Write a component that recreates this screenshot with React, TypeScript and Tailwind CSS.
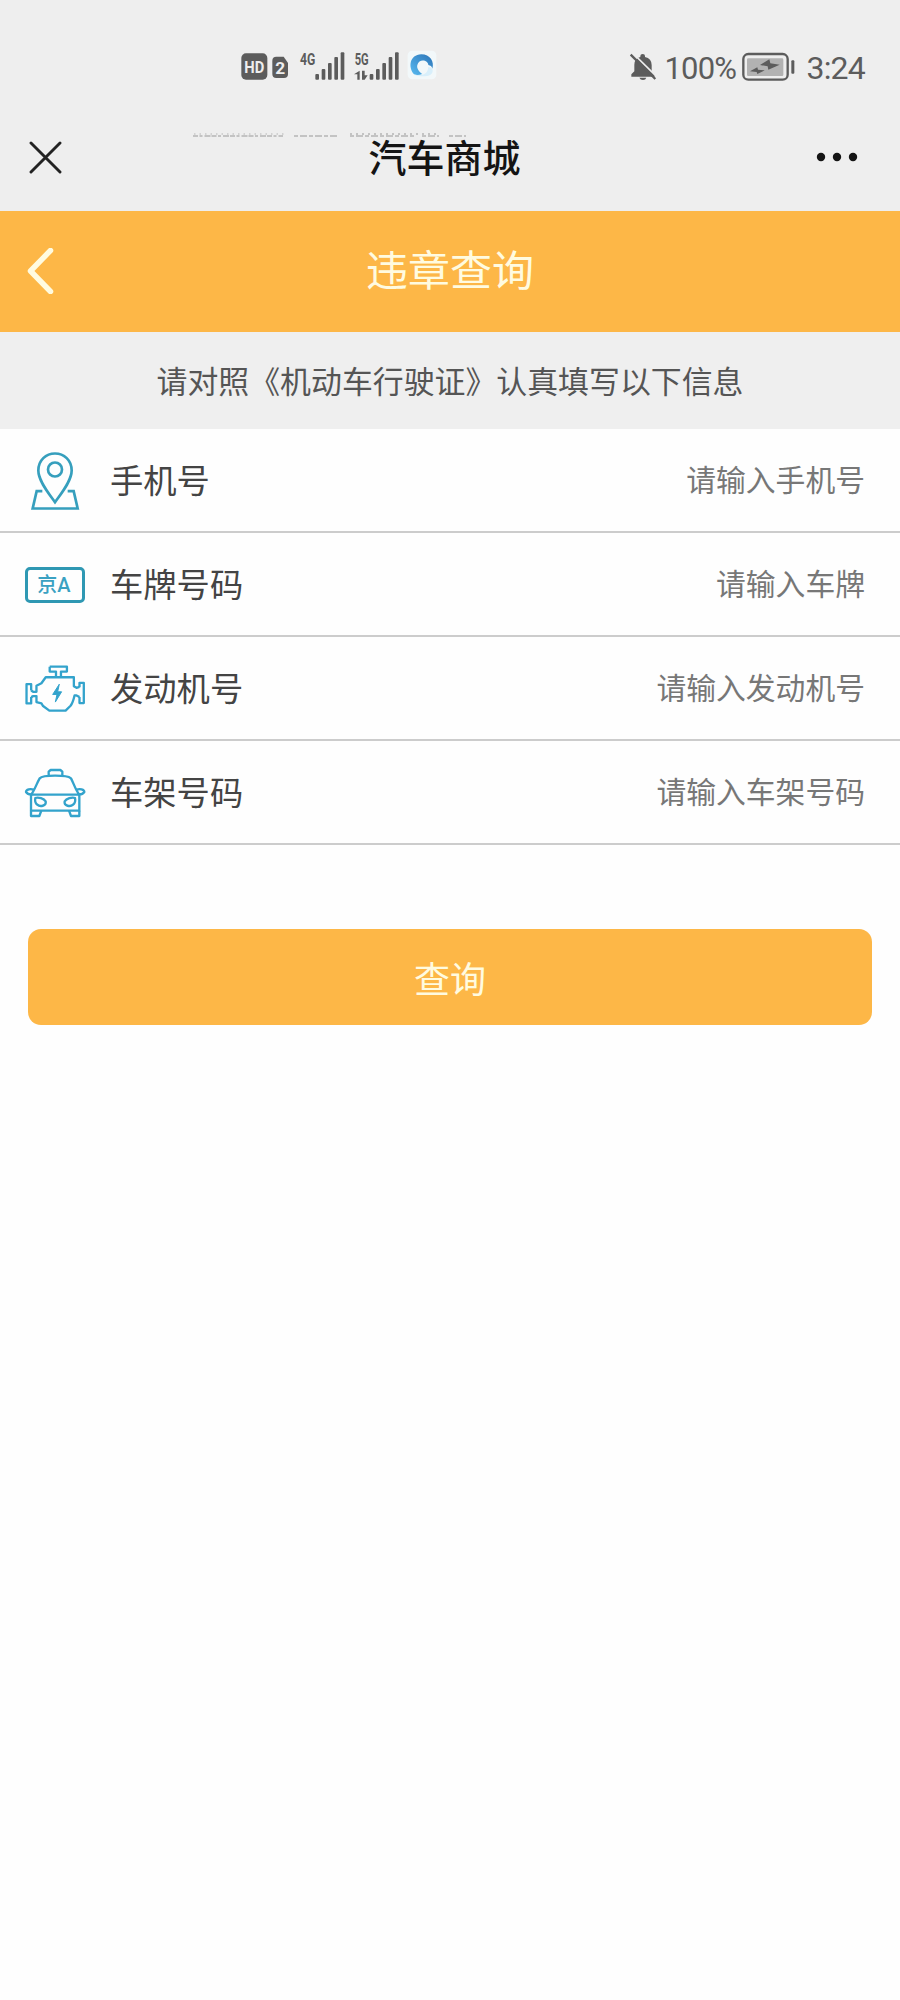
import type { ReactNode } from "react";

function NetworkStatus() {
  return (
    <svg viewBox="0 0 600 120" className="h-10 w-[200px]" fill="#5c5c5c" fontFamily="Roboto, sans-serif">
      <rect x="4" y="22" width="78" height="79" rx="14" />
      <text x="43" y="81" fontSize="50" fontWeight="700" fill="#eee" textAnchor="middle" textLength="60" lengthAdjust="spacingAndGlyphs">HD</text>
      <path d="M109 28h22l13 19v33q0 12-12 12h-23q-12 0-12-12V40q0-12 12-12z" transform="translate(0 4)" />
      <text x="121" y="83" fontSize="52" fontWeight="700" fill="#eee" textAnchor="middle">2</text>
      <text x="180" y="57" fontSize="50" fontWeight="700" textLength="46" lengthAdjust="spacingAndGlyphs">4G</text>
      <rect x="226" y="84" width="11" height="17" rx="3" />
      <rect x="245" y="69" width="11" height="32" rx="3" />
      <rect x="264" y="51" width="11" height="50" rx="3" />
      <rect x="283" y="33" width="11" height="68" rx="3" />
      <rect x="302" y="19" width="11" height="82" rx="3" />
      <text x="344" y="57" fontSize="50" fontWeight="700" textLength="42" lengthAdjust="spacingAndGlyphs">5G</text>
      <path d="M352 101V85h-10l17-11v27zM374 74v14h9l-9 13h-8V74z" />
      <rect x="389" y="84" width="11" height="17" rx="3" />
      <rect x="408" y="69" width="11" height="32" rx="3" />
      <rect x="427" y="51" width="11" height="50" rx="3" />
      <rect x="446" y="33" width="11" height="68" rx="3" />
      <rect x="465" y="19" width="11" height="82" rx="3" />
    </svg>
  );
}

function BrowserBadge() {
  return (
    <svg viewBox="0 0 90 90" className="h-[30px] w-[30px]">
      <defs>
        <linearGradient id="ring" x1="0" y1="1" x2="1" y2="0">
          <stop offset="0" stopColor="#58baf0" />
          <stop offset="1" stopColor="#2b74b8" />
        </linearGradient>
      </defs>
      <rect x="2" y="2" width="86" height="86" rx="14" fill="#f2f8fa" />
      <path d="M21 73C3 53 7 14 43 13c26 0 40 22 33 43-1-7-6-10-12-11 0-15-28-21-33 0-3 10 6 21 15 27-10 4-18 4-25 1z" fill="url(#ring)" />
      <path d="M22 74c9 5 26 6 38 4 11-1 18-9 17-18-2-8-9-9-14-8 1 8-4 20-17 22-9 2-17 0-24 0z" fill="#d8effb" />
    </svg>
  );
}

function BellOff() {
  return (
    <svg viewBox="0 0 84 90" className="h-[30px] w-7" fill="#5c5c5c">
      <path d="M7 74v-7l9-9V38q0-18 18-23v-3q0-6 7-6t7 6v3q20 5 20 24v19l9 9v7zM31 77h21q-2 7-10 7t-11-7z" />
      <path d="M11 3 83 74" stroke="#eee" strokeWidth="5" />
      <path d="M5 8 79 81" stroke="#5c5c5c" strokeWidth="7" />
    </svg>
  );
}

function Battery() {
  return (
    <svg viewBox="0 0 162 90" className="h-[30px] w-[54px]" fill="#5c5c5c">
      <rect x="4" y="6" width="133" height="77" rx="15" fill="none" stroke="#5c5c5c" strokeWidth="7" />
      <rect x="15" y="19" width="109" height="53" rx="4" fill="#b2b2b2" />
      <path d="M24 58 46 46l2 7 20 2-22 11-2-6zM54 39l28-17 3 12 28 4-34 15-2-10z" />
      <rect x="148" y="25" width="9" height="40" rx="3" />
    </svg>
  );
}

function PhoneStatusBar() {
  return (
    <div className="flex h-[106px] items-start pt-[46px] pr-[35px] pl-60 text-[#5c5c5c]">
      <NetworkStatus />
      <div className="-ml-[33px] mt-1 h-[30px] w-[30px]"><BrowserBadge /></div>
      <div className="ml-auto flex h-[42px] items-center">
        <BellOff />
        <span className="ml-[7px] w-[78px] pt-0.5 text-[31px] leading-none tracking-[-0.8px] whitespace-nowrap">100%</span>
        <Battery />
        <span className="ml-[10px] pt-0.5 text-[32px] leading-none tracking-[-0.8px] whitespace-nowrap">3:24</span>
      </div>
    </div>
  );
}

function AppBar() {
  return (
    <div className="relative grid h-[105px] grid-cols-[1fr_auto_1fr] items-center pr-[42px] pb-[3px] pl-[29px]">
      <svg viewBox="0 0 33 33" className="h-[33px] w-[33px]" stroke="#222" strokeWidth="2.9" strokeLinecap="round">
        <path d="M2 2 31 31M31 2 2 31" />
      </svg>
      <svg viewBox="0 0 275 6" className="absolute top-[26px] left-[192px] h-1.5 w-[275px]" fill="none" stroke="#b5b5b5" strokeWidth="1.4">
        <path d="M1 4h90" strokeDasharray="5 1.5 3 2 6 1" />
        <path d="M2 2h90" strokeDasharray="1.5 4" strokeWidth="1" />
        <path d="M102 4h44M158 4h65M230 4h17M257 4h17" strokeDasharray="4 2 7 2" />
        <path d="M158 2h88" strokeDasharray="2 4" />
      </svg>
      <h1 className="pt-[3px] pl-[2px] text-[38px] leading-none font-medium text-[#141414]">汽车商城</h1>
      <svg viewBox="0 0 42 10" className="h-2.5 w-[42px] justify-self-end" fill="#141414">
        <circle cx="5" cy="5" r="4.2" />
        <circle cx="21" cy="5" r="4.2" />
        <circle cx="37" cy="5" r="4.2" />
      </svg>
    </div>
  );
}

function PinIcon() {
  return (
    <svg viewBox="90 60 150 185" className="mt-px h-[62px] w-[50px]" fill="none" stroke="#369fbd" strokeWidth="8">
      <path d="M165 216C148 192 115 153 115 121c0-31 23-51 50-51s50 20 50 51c0 32-33 71-50 95z" />
      <circle cx="165" cy="118" r="21" />
      <path d="M127 183h-17l-12 52h135l-12-52h-18" />
    </svg>
  );
}

function PlateIcon() {
  return (
    <div className="mt-0.5 flex h-9 w-[60px] items-center justify-center rounded-[5px] border-[3px] border-[#2f98b3] pr-0.5 text-[20px] leading-none font-medium text-[#3aa1c2]">
      京A
    </div>
  );
}

function EngineIcon() {
  return (
    <svg viewBox="72 88 186 148" className="h-[49px] w-[62px]" fill="none" stroke="#33a3cc" strokeWidth="7" strokeLinejoin="round">
      <path d="M149 96h52v15h-18v17M149 96v15h19v17" />
      <path d="M93 168v-19H79v58h14v-19M239 158v-13h13v61h-13v-18" />
      <path d="M93 168l6 4h10v-18l15-8 13-18h85v27l8 5 9-3M93 188l6-3h10v18l15 4 5 8 19 14h49l15-15c7-9 9-18 12-31h6l9 5" />
      <path d="m178 149-20 31h13l-5 23 19-31h-12z" fill="#33a3cc" strokeWidth="3" />
    </svg>
  );
}

function TaxiIcon() {
  return (
    <svg viewBox="72 400 186 150" className="mt-0.5 h-[50px] w-[62px]" fill="none" stroke="#33a3cc" strokeWidth="7" strokeLinejoin="round">
      <path d="M146 421v-10l6-5h29l6 5v10M93 480c11-13 16-32 26-49 10-10 80-11 94 0 9 17 14 36 25 49M93 480h145v48H93z" />
      <path d="M101 465c-9-4-23-1-23 7 5 7 12 8 19 7M230 465c9-4 23-1 23 7-5 7-12 8-19 7" />
      <path d="M93 528v16h25l6-16M238 528v16h-25l-6-16" />
      <path d="M106 490c9-4 26 2 31 10 3 15-18 17-25 10-6-4-8-11-6-20zM225 490c-9-4-26 2-31 10-3 15 18 17 25 10 6-4 8-11 6-20z" />
    </svg>
  );
}

function Field({ icon, label, placeholder }: { icon: ReactNode; label: string; placeholder: string }) {
  return (
    <label className="flex h-[104px] items-center border-b-2 border-[#cccccc] pr-[35px]">
      <span className="flex w-[110px] shrink-0 justify-center">{icon}</span>
      <span className="shrink-0 pt-[3px] text-[33.3px] leading-none text-[#444]">{label}</span>
      <input
        type="text"
        placeholder={placeholder}
        className="h-12 min-w-0 flex-1 bg-transparent pt-px text-right text-[29.8px] text-[#444] outline-none placeholder:text-[#777] placeholder:opacity-100"
      />
    </label>
  );
}

export default function App() {
  return (
    <main className="flex min-h-[2000px] w-full flex-col bg-[#fefefe] font-[Roboto,'Noto_Sans_CJK_SC',sans-serif]">
      <div className="bg-[#eeeeee]">
        <PhoneStatusBar />
        <AppBar />
      </div>
      <header className="flex h-[121px] items-center bg-[#fdb747] px-[27px]">
        <svg viewBox="0 0 28 46" className="mb-0.5 h-[46px] w-7" fill="none" stroke="#fffbe0" strokeWidth="5.5" strokeLinecap="round" strokeLinejoin="round">
          <path d="M23.500 2.500 3.500 23l20 20.500" />
        </svg>
        <h2 className="flex-1 pr-7 text-center text-[42px] leading-none text-[#fffbe0]">违章查询</h2>
      </header>
      <p className="flex h-[97px] items-center justify-center bg-[#efefef] pt-[5px] text-[30.900px] leading-none text-[#555]">
        请对照《机动车行驶证》认真填写以下信息
      </p>
      <form>
        <Field icon={<PinIcon />} label="手机号" placeholder="请输入手机号" />
        <Field icon={<PlateIcon />} label="车牌号码" placeholder="请输入车牌" />
        <Field icon={<EngineIcon />} label="发动机号" placeholder="请输入发动机号" />
        <Field icon={<TaxiIcon />} label="车架号码" placeholder="请输入车架号码" />
        <div className="px-7 pt-[84px]">
          <button type="button" className="flex h-24 w-full items-center justify-center rounded-[13px] bg-[#fdb747] pt-[7px] text-[36px] leading-none text-[#fffbe0]">
            查询
          </button>
        </div>
      </form>
    </main>
  );
}
